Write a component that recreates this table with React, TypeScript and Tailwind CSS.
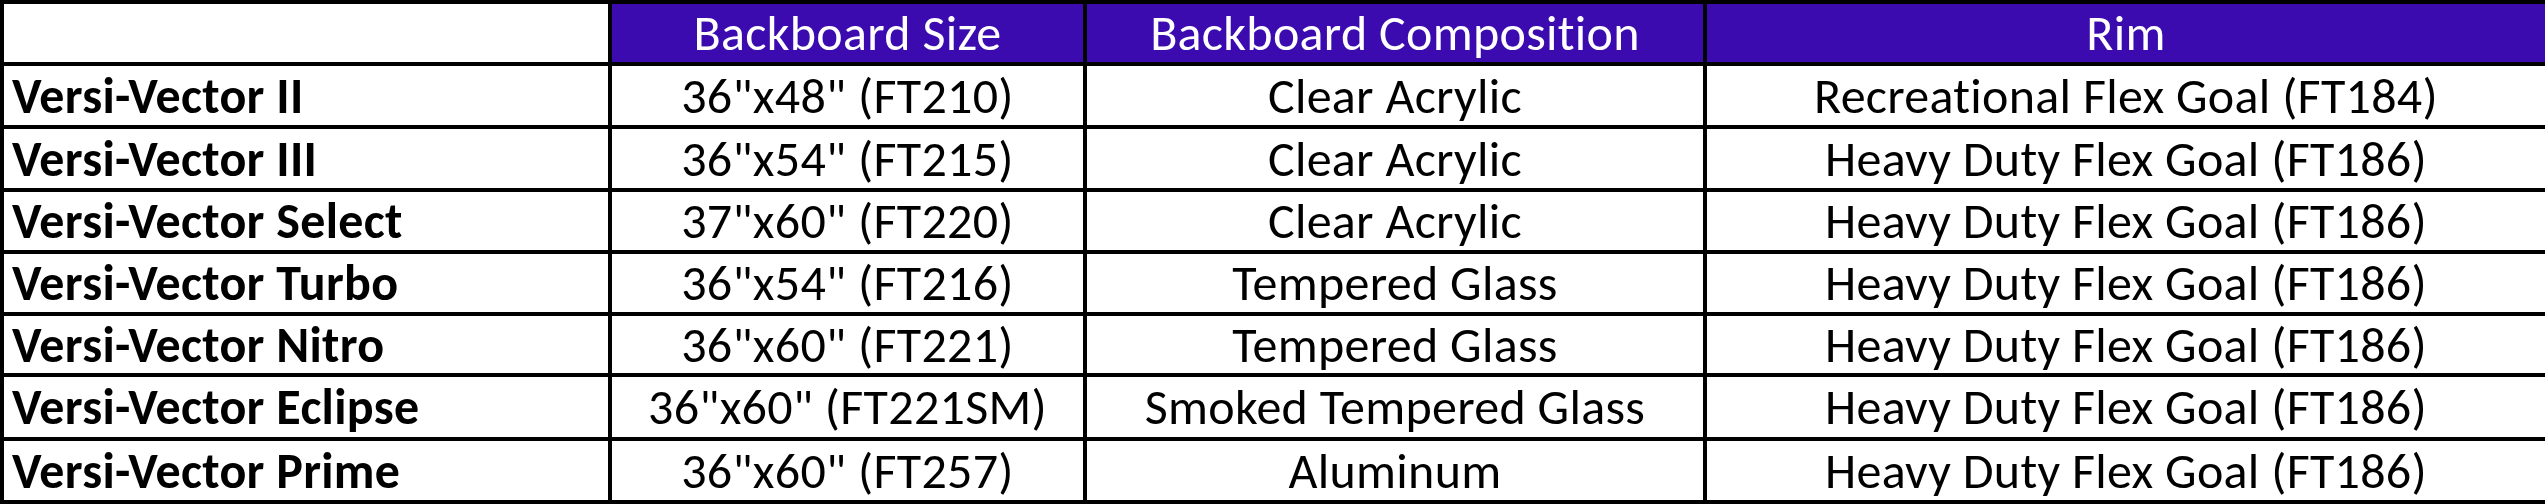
import React from "react";

const rows: [string, string, string, string][] = [
  ["Versi-Vector II", '36"x48" (FT210)', "Clear Acrylic", "Recreational Flex Goal (FT184)"],
  ["Versi-Vector III", '36"x54" (FT215)', "Clear Acrylic", "Heavy Duty Flex Goal (FT186)"],
  ["Versi-Vector Select", '37"x60" (FT220)', "Clear Acrylic", "Heavy Duty Flex Goal (FT186)"],
  ["Versi-Vector Turbo", '36"x54" (FT216)', "Tempered Glass", "Heavy Duty Flex Goal (FT186)"],
  ["Versi-Vector Nitro", '36"x60" (FT221)', "Tempered Glass", "Heavy Duty Flex Goal (FT186)"],
  ["Versi-Vector Eclipse", '36"x60" (FT221SM)', "Smoked Tempered Glass", "Heavy Duty Flex Goal (FT186)"],
  ["Versi-Vector Prime", '36"x60" (FT257)', "Aluminum", "Heavy Duty Flex Goal (FT186)"],
];

const heights = ["h-[63px]", "h-[63px]", "h-[62px]", "h-[62px]", "h-[61px]", "h-[64px]", "h-[63px]"];

export default function App() {
  return (
    <div className="w-[2545px] h-[504px] bg-white overflow-hidden">
      <table
        className="w-[2545px] border-collapse table-fixed text-black text-[50px] leading-none tracking-[0.3px] [font-variant-ligatures:none]"
        style={{ fontFamily: "Carlito, Calibri, Lato, 'Liberation Sans', sans-serif" }}
      >
        <colgroup>
          <col className="w-[608px]" />
          <col className="w-[475px]" />
          <col className="w-[620px]" />
          <col className="w-[842px]" />
        </colgroup>
        <thead>
          <tr className="h-[62px]">
            <th className="border-4 border-black bg-white"></th>
            <th className="border-4 border-black bg-[#3b0bb0] text-white font-normal text-center align-middle">
              Backboard Size
            </th>
            <th className="border-4 border-black bg-[#3b0bb0] text-white font-normal text-center align-middle">
              Backboard Composition
            </th>
            <th className="border-4 border-black bg-[#3b0bb0] text-white font-normal text-center align-middle">
              Rim
            </th>
          </tr>
        </thead>
        <tbody>
          {rows.map((r, i) => (
            <tr key={i} className={heights[i]}>
              <td className="border-4 border-black font-bold text-left pl-2 align-middle whitespace-nowrap">{r[0]}</td>
              <td className="border-4 border-black text-center align-middle whitespace-nowrap">{r[1]}</td>
              <td className="border-4 border-black text-center align-middle whitespace-nowrap">{r[2]}</td>
              <td className="border-4 border-black text-center align-middle whitespace-nowrap">{r[3]}</td>
            </tr>
          ))}
        </tbody>
      </table>
    </div>
  );
}
